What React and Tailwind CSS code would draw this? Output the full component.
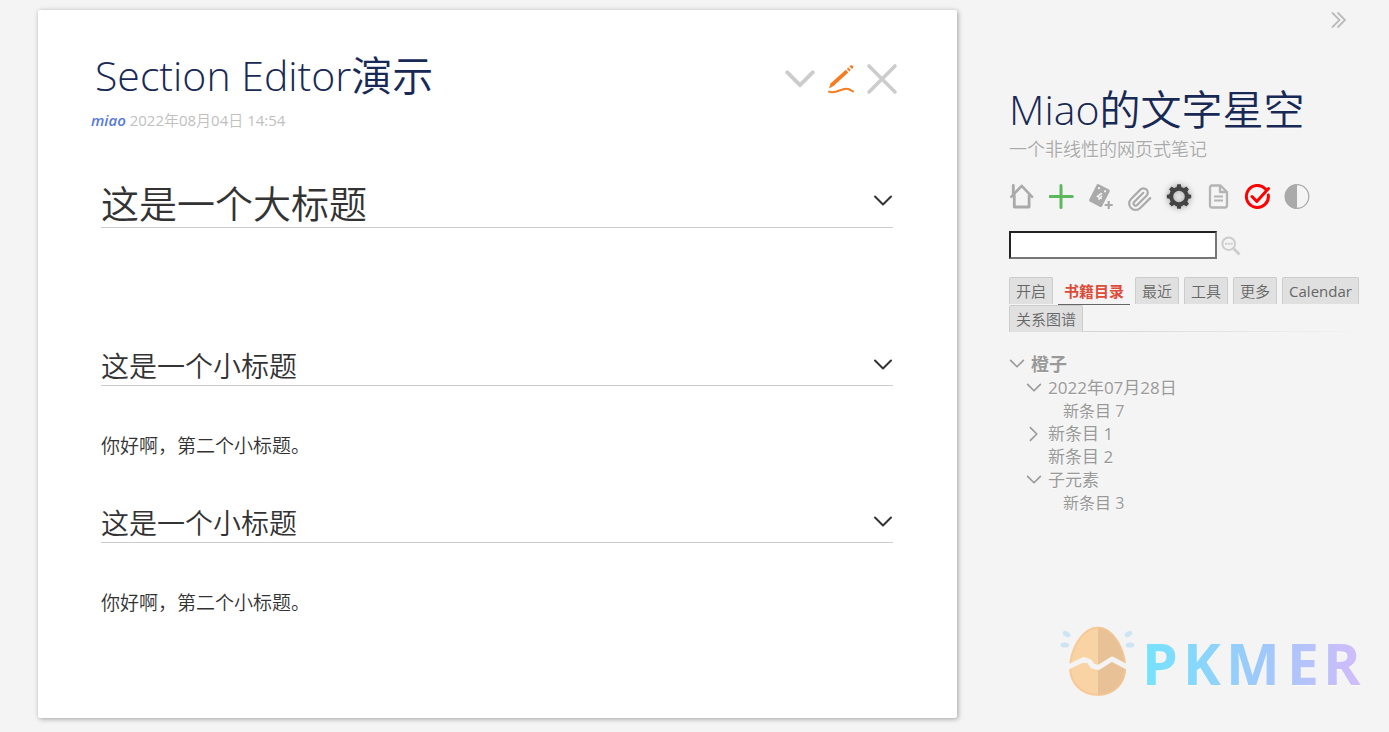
import { useState } from 'react';

const tabs = ['开启', '书籍目录', '最近', '工具', '更多', 'Calendar', '关系图谱'];

const tree = [
  { label: '橙子', level: 0, state: 'open' },
  { label: '2022年07月28日', level: 1, state: 'open' },
  { label: '新条目 7', level: 2 },
  { label: '新条目 1', level: 1, state: 'closed' },
  { label: '新条目 2', level: 1 },
  { label: '子元素', level: 1, state: 'open' },
  { label: '新条目 3', level: 2 }
];

const Chevron = ({ className, width = 2 }) => (
  <svg className={className} viewBox="0 0 20 12" fill="none" stroke="currentColor" strokeWidth={width} strokeLinecap="round" strokeLinejoin="round">
    <path d="M2 1.5l8 8 8-8" />
  </svg>
);

const HomeIcon = () => (
  <svg className="w-[26px] h-[26px]" viewBox="0 0 26 26" fill="none" stroke="#aaa" strokeLinecap="round" strokeLinejoin="round">
    <path d="M1.300 12.800L11.700 1.800l10.400 11" strokeWidth="2.600" />
    <path d="M4.300 11.500V23h14.800V11.500M3.300 1.500V10" strokeWidth="2.800" />
  </svg>
);

const PlusIcon = () => (
  <svg className="w-[26px] h-[26px]" viewBox="0 0 26 26" stroke="#5cb85c" strokeWidth="3" strokeLinecap="round">
    <path d="M12 1.500v22M.9 12.500h22.400" />
  </svg>
);

const NewJournalIcon = () => (
  <svg className="w-[26px] h-[26px]" viewBox="0 0 26 26">
    <g transform="rotate(27 12 11.500)">
      <rect x="4.200" y="2" width="14.600" height="19.600" rx="2" fill="#aaa" />
      <circle cx="7.800" cy="5.400" r="1.100" fill="#f4f4f4" />
      <circle cx="14.600" cy="5.400" r="1.100" fill="#f4f4f4" />
      <path d="M9 14.200l2.600-5.600h2l-2.200 4.200h1.200l.6-1.800h1.500l-.6 1.800h.8v1.500h-1.200v1.700h-1.600v-1.700z" fill="#f4f4f4" />
    </g>
    <path d="M20.700 16v10M15.700 21h10" stroke="#f4f4f4" strokeWidth="4" />
    <path d="M20.700 17v8M16.700 21h8" stroke="#aaa" strokeWidth="2.200" />
  </svg>
);

const ClipIcon = () => (
  <svg className="w-[26px] h-[26px]" viewBox="0 -2 24 24" fill="none" stroke="#aaa" strokeWidth="2" strokeLinecap="round" strokeLinejoin="round" overflow="visible">
    <path d="m21.44 11.05-9.19 9.19a6 6 0 0 1-8.49-8.49l8.57-8.57A4 4 0 1 1 18 8.84l-8.59 8.57a2 2 0 0 1-2.83-2.83l8.49-8.48" />
  </svg>
);

const GearIcon = () => (
  <svg className="w-[26px] h-[26px] drop-shadow-[0_0_3px_rgba(0,0,0,0.35)]" viewBox="0 0 26 26">
    <circle cx="13" cy="12.500" r="7.800" fill="none" stroke="#444" strokeWidth="4" />
    {[0, 45, 90, 135, 180, 225, 270, 315].map((a) => (
      <path key={a} d="M10.400 4.300l.8-4h3.600l.8 4z" fill="#444" transform={`rotate(${a} 13 12.500)`} />
    ))}
  </svg>
);

const PageIcon = () => (
  <svg className="w-[26px] h-[26px]" viewBox="0 0 26 26" fill="none" stroke="#b4b4b4" strokeWidth="2.300" strokeLinejoin="round">
    <path d="M7 1.500h8.500L22 8v13.500a2 2 0 0 1-2 2H7a2 2 0 0 1-2-2v-18a2 2 0 0 1 2-2zM15 1.500v6.500h6.500" />
    <path d="M9 12.500h9M9 16.500h9" strokeWidth="1.800" />
  </svg>
);

const CheckIcon = () => (
  <svg className="w-[26px] h-[26px]" viewBox="0 0 26 26" fill="none" stroke="#f00" strokeWidth="3" strokeLinecap="round" strokeLinejoin="round">
    <path d="M21.500 5A11 11 0 1 0 24.300 11" />
    <path d="M8 12.500l4.800 5L24.500 4.500" />
  </svg>
);

const ContrastIcon = () => (
  <svg className="w-[26px] h-[26px]" viewBox="0 0 26 26" overflow="visible">
    <circle cx="14" cy="12.500" r="11.800" fill="none" stroke="#aaa" strokeWidth="1.300" />
    <path d="M14 .3a12.200 12.200 0 0 0 0 24.400z" fill="#aaa" />
  </svg>
);

const pageControls = [
  { label: 'home', Icon: HomeIcon },
  { label: 'new tiddler', Icon: PlusIcon },
  { label: 'new journal', Icon: NewJournalIcon },
  { label: 'import', Icon: ClipIcon },
  { label: 'settings', Icon: GearIcon },
  { label: 'layout', Icon: PageIcon },
  { label: 'saved', Icon: CheckIcon },
  { label: 'palette', Icon: ContrastIcon }
];

const Logo = () => (
  <svg className="w-[302px] h-[76px]" viewBox="0 0 302 76">
    <defs>
      <linearGradient id="word" gradientUnits="userSpaceOnUse" x1="86" y1="0" x2="302" y2="0">
        <stop offset="0" stopColor="#76e2fd" />
        <stop offset="0.5" stopColor="#9ccafb" />
        <stop offset="1" stopColor="#d2bbfb" />
      </linearGradient>
    </defs>
    <path d="M37.700 1.700C22 1.700 9.300 24 9.300 43c0 16 12 27.700 28.400 27.700z" fill="#f9d3a3" />
    <path d="M37.700 1.700C53.500 1.700 66 24 66 43c0 16-12 27.700-28.300 27.700z" fill="#e8c197" />
    <path d="M37.700 2.700C22.500 2.700 10.300 24 10.300 43c0 15.500 11.500 26.700 27.400 26.700S65 58.500 65 43C65 24 53 2.700 37.700 2.700z" fill="none" stroke="#f8c491" strokeWidth="2" opacity="0.7" />
    <path d="M7 42.500L24 34.500l5.500 2 3 4.500 6 1.500L52 34l16 8.500" fill="none" stroke="#f4f4f4" strokeWidth="5" strokeLinejoin="round" />
    <g fill="#cde4f5">
      <ellipse cx="6.500" cy="9" rx="4" ry="2.600" transform="rotate(30 6.500 9)" />
      <ellipse cx="4.800" cy="20" rx="4.300" ry="2.600" />
      <ellipse cx="68.500" cy="9" rx="4" ry="2.600" transform="rotate(-30 68.500 9)" />
      <ellipse cx="70" cy="20" rx="4.300" ry="2.600" />
    </g>
    <text x="82 123 166 227 263" y="60" fill="url(#word)" className="font-['Open_Sans'] font-bold text-[57px]">PKMER</text>
  </svg>
);

const SectionHeading = ({ big, children }) => {
  const Tag = big ? 'h2' : 'h3';
  return (
    <div className="flex items-center justify-between border-b border-[#ccc] pb-px">
      <Tag className={big ? 'text-[38px] leading-[46px]' : 'text-[28px] leading-[35px]'}>{children}</Tag>
      <button aria-label="toggle section" className="pb-1">
        <Chevron className="w-5 h-3" />
      </button>
    </div>
  );
};

const Tiddler = () => (
  <article className="flex-1 min-w-0 bg-white rounded-xs shadow-[1px_1px_5px_rgba(0,0,0,0.35)] pt-[39px] pb-[100px] pl-[53px] pr-[59px]">
    <header>
      <div className="flex items-center justify-between">
        <h1 className="pl-1 text-[41px] leading-[52px] text-[#182955]">Section Editor演示</h1>
        <div className="flex items-center gap-2.5 pt-2 text-[#ccc]">
          <button aria-label="more">
            <Chevron className="w-8 h-[19px]" width={2.5} />
          </button>
          <button aria-label="edit">
            <svg className="w-[30px] h-[30px]" viewBox="0 0 30 30" fill="#f57c1f">
              <path d="M3 24.500l1.500-5L19.800 5.800l2.500 2.600L7.500 22z" />
              <path d="M20.800 4.800l1.400-1.300 2.600 2.600-1.400 1.300zM23.400 2.400l1.200-1c1.500-.9 3.500.9 2.500 2.500l-1.100 1.100z" />
              <path d="M3 27.600c7 3 12-3.600 18-2.800 3 .3 3.500 1.700 6 2.600" fill="none" stroke="#f57c1f" strokeWidth="2" strokeLinecap="round" />
            </svg>
          </button>
          <button aria-label="close">
            <svg className="w-8 h-8" viewBox="0 0 32 32" stroke="currentColor" strokeWidth="3.600" strokeLinecap="round">
              <path d="M3 3l26 26M29 3L3 29" />
            </svg>
          </button>
        </div>
      </div>
      <div className="mt-[9px] font-normal font-['Open_Sans','Noto_Sans_CJK_SC_DemiLight','Noto_Sans_CJK_SC',sans-serif] text-[15px] leading-5 text-[#c0c0c0]">
        <a href="#miao" className="font-semibold italic text-[#5778d8]">miao</a> 2022年08月04日 14:54
      </div>
    </header>

    <div className="mt-[50px] ml-2.5 mr-[5px] text-[#333]">
      <section className="pb-[121px]">
        <SectionHeading big>这是一个大标题</SectionHeading>
      </section>
      <div className="flex flex-col gap-[45px] text-[19px] leading-[30px]">
        <SectionHeading>这是一个小标题</SectionHeading>
        <p>你好啊，第二个小标题。</p>
        <SectionHeading>这是一个小标题</SectionHeading>
        <p>你好啊，第二个小标题。</p>
      </div>
    </div>
  </article>
);

const TreeItem = ({ item }) => {
  const styles = [
    'h-6 text-[18px] font-bold',
    'h-[23px] pl-[17px] text-[17px]',
    'h-[23px] pl-[32px] text-[16px]'
  ];
  return (
    <li className={`flex items-center ${styles[item.level]}`}>
      <span className="w-[22px] shrink-0">
        {item.state && (
          <button aria-label="toggle branch" className="flex w-4 h-4 items-center justify-center">
            <Chevron className={item.state === 'closed' ? 'w-4 h-2.5 shrink-0 -rotate-90' : 'w-4 h-2.5'} />
          </button>
        )}
      </span>
      <a href="#entry">{item.label}</a>
    </li>
  );
};

const Sidebar = () => {
  const [activeTab, setActiveTab] = useState('书籍目录');

  return (
    <aside className="w-[380px] shrink-0 flex flex-col text-[#999] [text-shadow:0_1px_0_rgba(255,255,255,0.8)]">
      <button aria-label="hide sidebar" className="self-end mr-[41px] text-[#bbb]">
        <svg className="w-[18px] h-5" viewBox="0 0 18 20" fill="none" stroke="currentColor" strokeWidth="1.8">
          <path d="M2 2.500l7.500 7.500L2 17.500M7.500 2.500L15 10l-7.500 7.500" />
        </svg>
      </button>

      <h1 className="mt-[52px] text-[41px] leading-[54px] text-[#182955]">Miao的文字星空</h1>
      <div className="text-[18px] leading-[26px] text-[#aaa]">一个非线性的网页式笔记</div>

      <div className="mt-[22px] pl-px flex gap-[13px]">
        {pageControls.map(({ label, Icon }) => (
          <button key={label} aria-label={label} className="w-[26px] h-[26px]">
            <Icon />
          </button>
        ))}
      </div>

      <div className="mt-[21px] flex items-center gap-1">
        <input type="search" aria-label="search" className="w-[208px] h-7 bg-white border-2 border-t-[#222] border-l-[#222] border-r-[#767676] border-b-[#767676]" />
        <button aria-label="advanced search">
          <svg className="w-5 h-5" viewBox="0 -1 20 20" overflow="visible" fill="none" stroke="#ccc" strokeWidth="2">
            <circle cx="7.700" cy="7.700" r="6.300" />
            <path d="M12.500 12.500l6 6" strokeWidth="2.800" />
            <path d="M4 7.700h7.600" strokeDasharray="2 .8" />
          </svg>
        </button>
      </div>

      <div className="mt-[18px] mr-5 font-normal font-['Open_Sans','Noto_Sans_CJK_SC_DemiLight','Noto_Sans_CJK_SC',sans-serif]">
        <div className="flex flex-wrap gap-x-[5px] gap-y-px text-[15px] leading-[26px] text-[#666]">
          {tabs.map((tab) => (
            <button
              key={tab}
              onClick={() => setActiveTab(tab)}
              className={
                tab === activeTab
                  ? "h-7 -mb-px px-1.5 border-b border-[#666] font-['Noto_Sans_CJK_SC',sans-serif] font-bold text-[#dd4b39]"
                  : 'h-[27px] px-1.5 bg-[#e0e0e0] border border-b-0 border-[#ccc] rounded-t-xs'
              }
            >
              {tab}
            </button>
          ))}
        </div>
        <div className="h-px -mt-px bg-linear-to-r from-[#ccc] to-transparent" />
      </div>

      <ul className="mt-5 font-normal">
        {tree.map((item) => (
          <TreeItem key={item.label} item={item} />
        ))}
      </ul>

      <div className="mt-[111px] ml-[51px]">
        <Logo />
      </div>
    </aside>
  );
};

const App = () => {
  return (
    <div className="min-h-screen flex items-start gap-[52px] bg-[#f4f4f4] pl-[38px] pt-2.5 font-[350] font-['Open_Sans','Noto_Sans_CJK_SC',sans-serif]">
      <Tiddler />
      <Sidebar />
    </div>
  );
};

export default App;
